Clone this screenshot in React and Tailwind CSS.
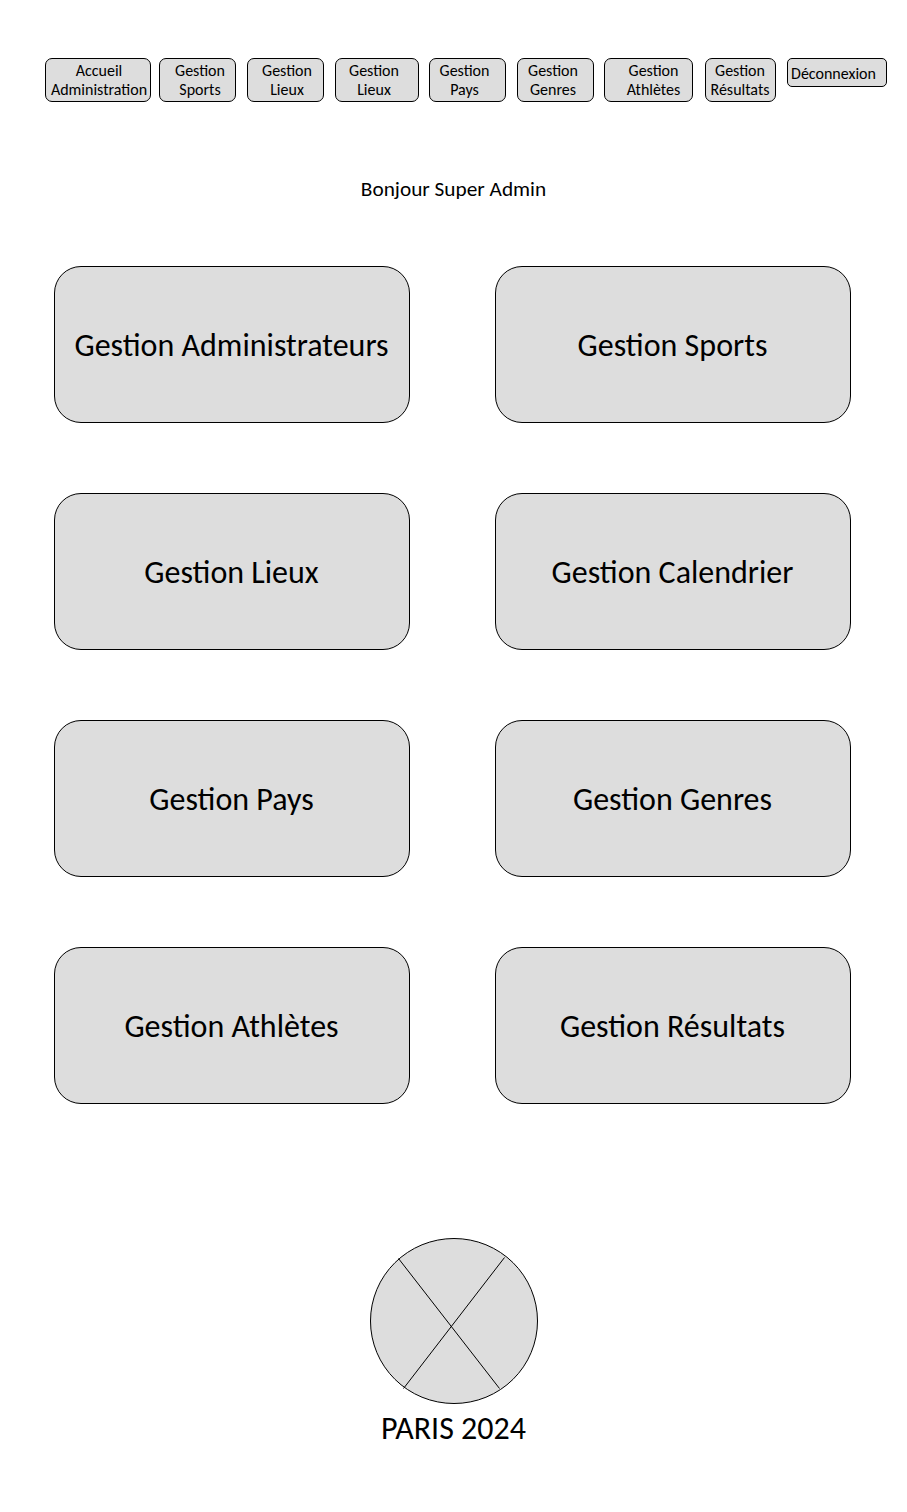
import React from "react";

const navItems = [
  { lines: ["Accueil", "Administration"], box: "ml-[45px] w-[106px] pl-[2px]" },
  { lines: ["Gestion", "Sports"], box: "ml-2 w-[77px] pl-[5px]" },
  { lines: ["Gestion", "Lieux"], box: "ml-[11px] w-[77px] pl-[3px]" },
  { lines: ["Gestion", "Lieux"], box: "ml-[11px] w-[84px] pr-[6px]" },
  { lines: ["Gestion", "Pays"], box: "ml-[10px] w-[77px] pr-[6px]" },
  { lines: ["Gestion", "Genres"], box: "ml-[11px] w-[77px] pr-[5px]" },
  { lines: ["Gestion", "Athlètes"], box: "ml-[10px] w-[89px] pl-[10px]" },
  { lines: ["Gestion", "Résultats"], box: "ml-3 w-[71px] pr-[1px]" },
];

const cards = [
  "Gestion Administrateurs",
  "Gestion Sports",
  "Gestion Lieux",
  "Gestion Calendrier",
  "Gestion Pays",
  "Gestion Genres",
  "Gestion Athlètes",
  "Gestion Résultats",
];

function NavButton({ lines, box }) {
  return (
    <button
      className={`${box} flex h-11 shrink-0 flex-col items-center justify-center rounded-[7px] border border-black bg-[#dddddd] text-[16px] leading-[19px] whitespace-nowrap`}
    >
      {lines.map((line) => (
        <span key={line}>{line}</span>
      ))}
    </button>
  );
}

function Logo() {
  return (
    <svg className="block h-[168px] w-[170px]" viewBox="0 0 170 168" fill="none" stroke="#000" strokeWidth="1">
      <ellipse cx="85" cy="84" rx="83.5" ry="82.5" fill="#dddddd" />
      <path d="M29.5 21.5 130.500 151.500M135.500 20.500 34.500 151.500" />
    </svg>
  );
}

export default function App() {
  return (
    <div className="flex h-[1512px] w-[907px] flex-col overflow-hidden bg-white font-['Carlito','Lato',sans-serif] text-black">
      <nav className="mt-[58px] flex items-start">
        {navItems.map((item, i) => (
          <NavButton key={i} {...item} />
        ))}
        <button className="ml-[11px] flex h-[29px] w-[100px] shrink-0 items-center justify-center rounded-[5px] border border-black bg-[#dddddd] pt-[2px] pr-[7px] text-[16px] leading-[19px] whitespace-nowrap">
          Déconnexion
        </button>
      </nav>

      <h1 className="mt-[75px] text-center text-[21.3px] leading-6">Bonjour Super Admin</h1>

      <main className="mt-[65px] ml-[54px] grid w-[797px] grid-cols-[356px_356px] gap-x-[85px] gap-y-[70px]">
        {cards.map((title) => (
          <button
            key={title}
            className="flex h-[157px] items-center justify-center rounded-[27px] border border-black bg-[#dddddd] pt-[2px] pr-[1px] text-[32px] whitespace-nowrap"
          >
            {title}
          </button>
        ))}
      </main>

      <footer className="mt-[133px] flex flex-col items-center">
        <Logo />
        <p className="mt-[6px] text-[32px] leading-9">PARIS 2024</p>
      </footer>
    </div>
  );
}
